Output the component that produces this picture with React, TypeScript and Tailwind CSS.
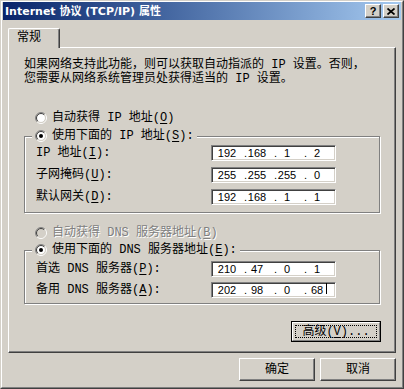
import React from "react";

function U({ c }: { c: string }) {
  return <span className="underline underline-offset-[2px]">{c}</span>;
}

function Radio({ checked = false, disabled = false }: { checked?: boolean; disabled?: boolean }) {
  return (
    <svg width="12" height="12" viewBox="0 0 12 12" className="block shrink-0">
      <circle cx="6" cy="6" r="4.2" fill={disabled ? "#d4d0c8" : "#ffffff"} />
      <path d="M2.111 9.889A5.5 5.5 0 0 1 9.889 2.111" fill="none" stroke="#808080" />
      <path d="M9.889 2.111A5.5 5.5 0 0 1 2.111 9.889" fill="none" stroke="#ffffff" />
      <path d="M2.818 9.182A4.5 4.5 0 0 1 9.182 2.818" fill="none" stroke="#404040" />
      <path d="M9.182 2.818A4.5 4.5 0 0 1 2.818 9.182" fill="none" stroke="#d4d0c8" />
      {checked && <circle cx="6" cy="6" r="2" fill={disabled ? "#808080" : "#000000"} />}
    </svg>
  );
}

function IpBox({ parts, caret = false }: { parts: string[]; caret?: boolean }) {
  return (
    <div className="w-[125px] h-[16px] shrink-0 bg-white border border-[#808080] border-r-white border-b-white shadow-[inset_1px_1px_0_#404040,inset_-1px_-1px_0_#d4d0c8] flex items-center pl-[5px] font-['Liberation_Sans',sans-serif] text-[11px] leading-none text-black">
      {parts.map((p, i) => (
        <React.Fragment key={i}>
          {i > 0 && <span className="w-[10px] text-right">.</span>}
          <span className="w-[20px] text-center">
            <span className="relative">
              {p}
              {caret && i === 3 && (
                <span className="absolute left-full ml-[3px] top-[-1px] w-px h-[11px] bg-black" />
              )}
            </span>
          </span>
        </React.Fragment>
      ))}
    </div>
  );
}

function Row({ label, parts, caret = false }: { label: React.ReactNode; parts: string[]; caret?: boolean }) {
  return (
    <div className="flex items-center h-[16px]">
      <div className="w-[186px] shrink-0 pl-[11px] whitespace-nowrap">{label}</div>
      <IpBox parts={parts} caret={caret} />
    </div>
  );
}

function Btn({ children }: { children: React.ReactNode }) {
  return (
    <div className="w-[76px] h-[23px] bg-[#d4d0c8] border border-white border-r-[#404040] border-b-[#404040] shadow-[inset_-1px_-1px_0_#808080] flex items-center justify-center">
      {children}
    </div>
  );
}

function CapBtn({ children }: { children: React.ReactNode }) {
  return (
    <div className="w-[16px] h-[14px] bg-[#d4d0c8] border border-white border-r-[#404040] border-b-[#404040] shadow-[inset_-1px_-1px_0_#808080] flex items-center justify-center">
      {children}
    </div>
  );
}

export default function App() {
  return (
    <div className="w-[404px] h-[389px] bg-[#d4d0c8] border border-[#d4d0c8] border-r-[#404040] border-b-[#404040] font-['Liberation_Mono','Noto_Sans_CJK_SC',monospace] text-[12px] leading-[14px] text-black">
      <div className="h-full border border-white border-r-[#808080] border-b-[#808080] px-[1px] flex flex-col">
        {/* Title bar */}
        <div className="h-[18px] shrink-0 flex items-center justify-between pl-[2px] pr-[2px] bg-linear-to-r from-[#0a246a] to-[#a6caf0]">
          <span className="text-white font-bold text-[11px] leading-none font-['DejaVu_Sans','Noto_Sans_CJK_SC',sans-serif] whitespace-nowrap">
            Internet 协议 (TCP/IP) 属性
          </span>
          <div className="flex gap-[2px]">
            <CapBtn>
              <span className="font-['Liberation_Sans',sans-serif] font-bold text-[11px] leading-none text-black">?</span>
            </CapBtn>
            <CapBtn>
              <svg width="8" height="7" viewBox="0 0 8 7" className="block">
                <path d="M0.5 0.5L7.5 6.5M7.5 0.5L0.5 6.5" stroke="#000" strokeWidth="1.7" />
              </svg>
            </CapBtn>
          </div>
        </div>

        {/* Tab + panel */}
        <div className="ml-[5px] mt-[8px] w-[388px]">
          <div className="relative z-10 -mb-px w-[52px] h-[20px] bg-[#d4d0c8] border-l border-t border-r border-white border-r-[#404040] rounded-t-[2px] shadow-[inset_-1px_0_0_#808080] flex items-center pl-[8px] pb-[2px]">
            常规
          </div>
          <div className="h-[306px] border border-white border-r-[#404040] border-b-[#404040] shadow-[inset_-1px_-1px_0_#808080] pt-[10px] pl-[15px]">
            <div className="whitespace-nowrap">
              如果网络支持此功能，则可以获取自动指派的 IP 设置。否则，
              <br />
              您需要从网络系统管理员处获得适当的 IP 设置。
            </div>

            <div className="mt-[25px] h-[14px] flex items-center gap-[5px] pl-[11px] whitespace-nowrap">
              <Radio />
              <span>
                自动获得 IP 地址(<U c="O" />)
              </span>
            </div>

            <div className="mt-[11px] w-[356px] border border-[#808080] shadow-[inset_1px_1px_0_#ffffff,1px_1px_0_#ffffff] pb-[7px]">
              <div className="-mt-[8px] ml-[7px] w-fit h-[14px] px-[3px] bg-[#d4d0c8] flex items-center gap-[5px] whitespace-nowrap">
                <Radio checked />
                <span>
                  使用下面的 IP 地址(<U c="S" />):
                </span>
              </div>
              <div className="mt-[2px] flex flex-col gap-[6px]">
                <Row label={<>IP 地址(<U c="I" />):</>} parts={["192", "168", "1", "2"]} />
                <Row label={<>子网掩码(<U c="U" />):</>} parts={["255", "255", "255", "0"]} />
                <Row label={<>默认网关(<U c="D" />):</>} parts={["192", "168", "1", "1"]} />
              </div>
            </div>

            <div className="mt-[13px] h-[14px] flex items-center gap-[5px] pl-[11px] whitespace-nowrap">
              <Radio disabled />
              <span className="text-[#808080] [text-shadow:1px_1px_0_#ffffff]">
                自动获得 DNS 服务器地址(<U c="B" />)
              </span>
            </div>

            <div className="mt-[10px] w-[356px] border border-[#808080] shadow-[inset_1px_1px_0_#ffffff,1px_1px_0_#ffffff] pb-[5px]">
              <div className="-mt-[8px] ml-[7px] w-fit h-[14px] px-[3px] bg-[#d4d0c8] flex items-center gap-[5px] whitespace-nowrap">
                <Radio checked />
                <span>
                  使用下面的 DNS 服务器地址(<U c="E" />):
                </span>
              </div>
              <div className="mt-[4px] flex flex-col gap-[5px]">
                <Row label={<>首选 DNS 服务器(<U c="P" />):</>} parts={["210", "47", "0", "1"]} />
                <Row label={<>备用 DNS 服务器(<U c="A" />):</>} parts={["202", "98", "0", "68"]} caret />
              </div>
            </div>

            <div className="mt-[17px] pl-[267px]">
              <div className="w-[90px] h-[21px] border border-black">
                <div className="h-full border border-white border-r-[#808080] border-b-[#808080] p-[2px]">
                  <div className="h-full border border-dotted border-black flex items-center justify-center whitespace-nowrap">
                    高级(<U c="V" />)...
                  </div>
                </div>
              </div>
            </div>
          </div>

          <div className="mt-[5px] flex justify-end gap-[5px]">
            <Btn>确定</Btn>
            <Btn>取消</Btn>
          </div>
        </div>
      </div>
    </div>
  );
}
